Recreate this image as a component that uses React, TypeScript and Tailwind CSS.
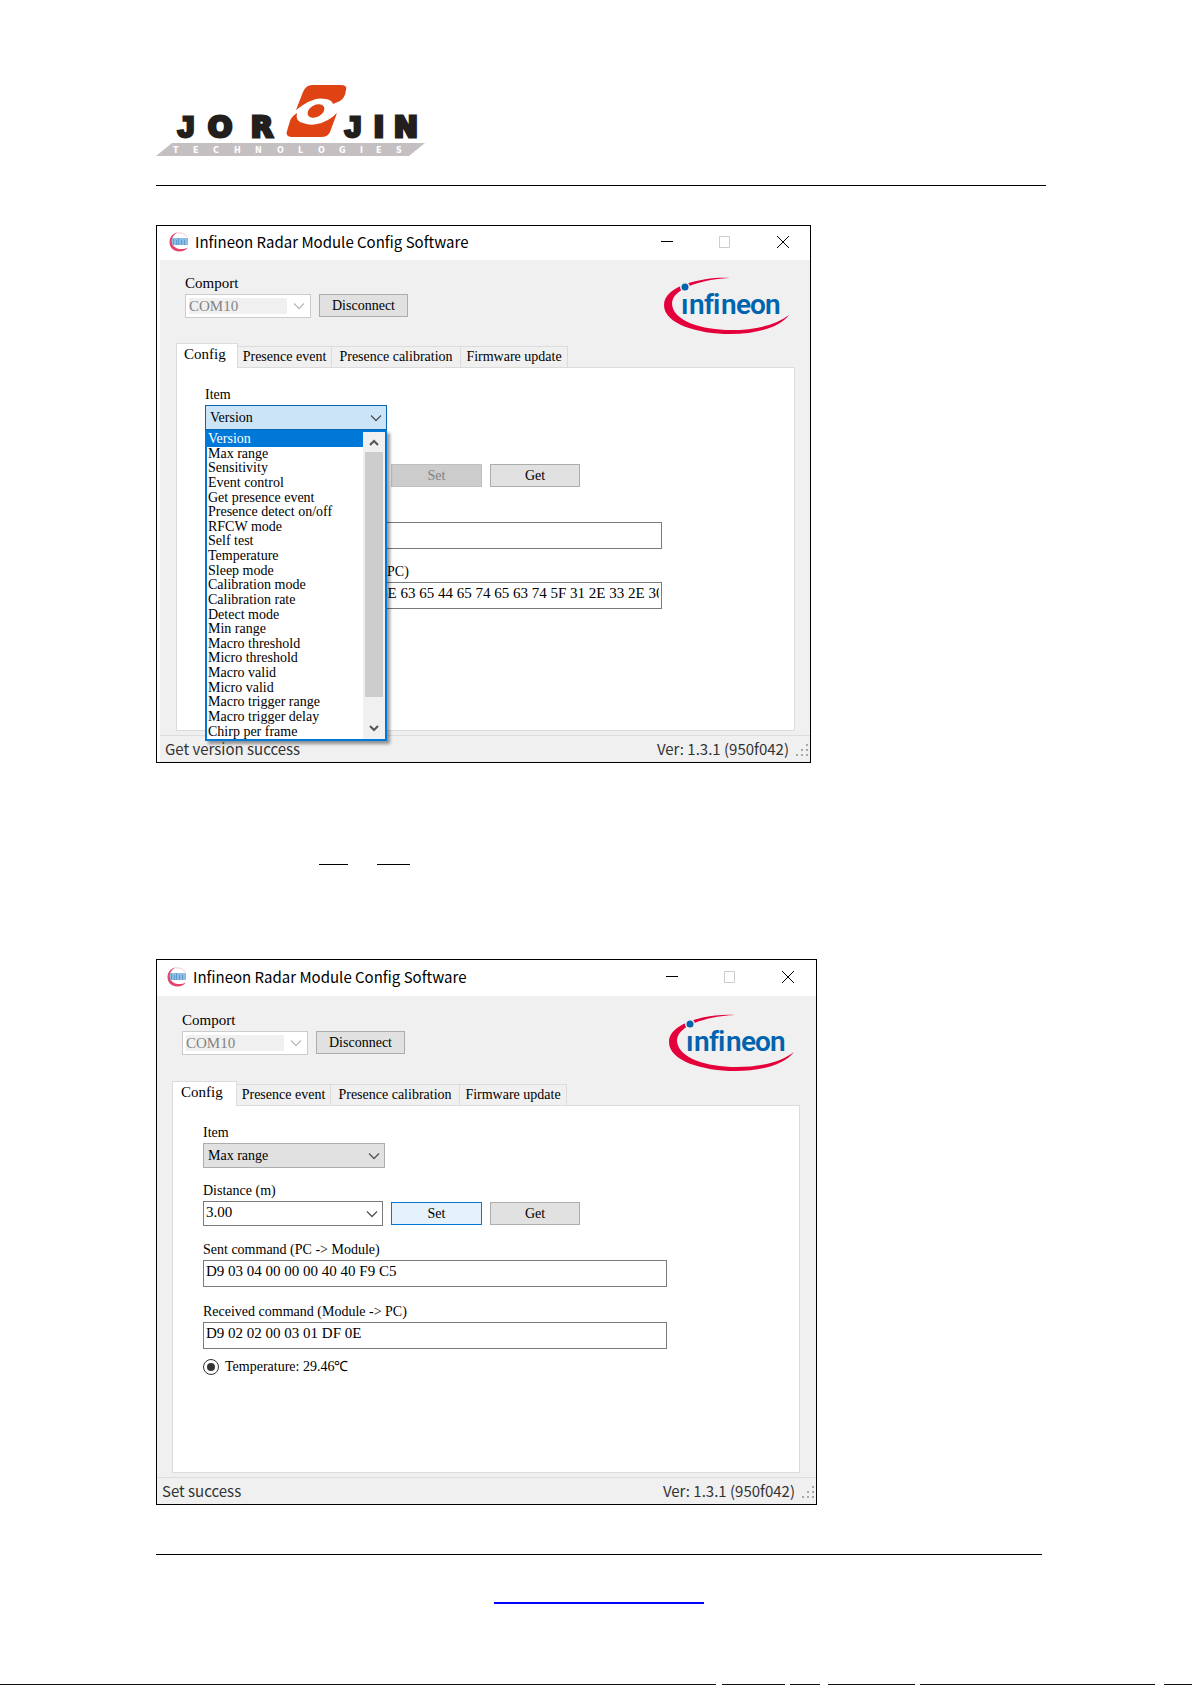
import { useId, useState } from 'react';
import type { ReactNode } from 'react';

const items = [
  'Version',
  'Max range',
  'Sensitivity',
  'Event control',
  'Get presence event',
  'Presence detect on/off',
  'RFCW mode',
  'Self test',
  'Temperature',
  'Sleep mode',
  'Calibration mode',
  'Calibration rate',
  'Detect mode',
  'Min range',
  'Macro threshold',
  'Micro threshold',
  'Macro valid',
  'Micro valid',
  'Macro trigger range',
  'Macro trigger delay',
  'Chirp per frame',
];

const tabs = [
  { label: 'Presence event', width: 'w-[94px]' },
  { label: 'Presence calibration', width: 'w-[129px]' },
  { label: 'Firmware update', width: 'w-[107px]' },
];

function JorjinLogo() {
  return (
    <svg viewBox="0 0 270 72" className="w-[270px] h-[72px]" role="img" aria-label="Jorjin Technologies">
      <g
        fontFamily="'DejaVu Sans', sans-serif"
        fontWeight="700"
        fontSize="29"
        fill="#231f1c"
        stroke="#231f1c"
        strokeWidth="3"
        textAnchor="middle"
      >
        <text y="52" x="30" fontFamily="'Liberation Sans', sans-serif" fontSize="30">J</text>
        <text y="52" x="64 106">OR</text>
        <text y="52" x="197" fontFamily="'Liberation Sans', sans-serif" fontSize="30">J</text>
        <text y="52" x="223 250">IN</text>
      </g>
      <path d="M140 25 L147 7 Q150 0 156 0 H184 Q192 0 190 5 Q189 13 184 16 L177 19 Q176 15 170 14 Q164 13 160 14 Q153 16 147 20 Z" fill="#df4213" />
      <path d="M141 28 Q139 36 147 38 Q154 41 161 39 Q172 37 181 28 L174 47 Q172 52 165 52 H135 Q129 51 131 46 L134 36 Q135 32 141 28 Z" fill="#df4213" />
      <ellipse cx="160" cy="26" rx="9" ry="6" transform="rotate(-28 160 26)" fill="#df4213" />
      <path d="M16 58 H269 L253 71 H0 Z" fill="#c4c0c1" />
      <text
        y="68"
        x="17 37 57 78 99 121 142 162 183 204 220 240"
        fontFamily="'DejaVu Sans', sans-serif"
        fontWeight="700"
        fontSize="8"
        fill="#fff"
      >
        TECHNOLOGIES
      </text>
    </svg>
  );
}

function InfineonLogo({ className }: { className: string }) {
  return (
    <svg viewBox="0 0 126 57" className={className} role="img" aria-label="Infineon">
      <path
        d="M66 1 C48 -1 0 6 0 28 C0 47 34 57 66 57 C94 57 116 50 125 38 C112 48 92 53 67 53 C38 53 9 44 8 27 C8 10 42 2 66 1 Z"
        fill="#e4003a"
      />
      <circle cx="21" cy="10" r="5" fill="#f0f0f0" />
      <circle cx="21" cy="10" r="3.5" fill="#0063ae" />
      <text
        x="17 25 40 49 57 72 86 101"
        y="37"
        fontFamily="Roboto, sans-serif"
        fontWeight="600"
        fontSize="28"
        fill="#0063ae"
      >
        ınfineon
      </text>
    </svg>
  );
}

function AppIcon() {
  return (
    <svg viewBox="0 0 20 20" className="w-5 h-5">
      <path d="M9 .5 C4 1 .5 5 .5 10 C.5 16 5 19.500 10 19.500 C14 19.500 17 18 19 15.500 C12 18.500 5 17 3 11 C2 6 5 2 9 .5 Z" fill="#e4436c" />
      <path d="M9 1 Q15 0 18 5" fill="none" stroke="#f3c6d2" />
      <rect x="3" y="6" width="16" height="7" fill="#8fbde2" />
      <path d="M4.500 7v6M7.500 8v5M9.500 6v7M12.500 8v5M15.500 8v5" stroke="#5b9bd0" />
    </svg>
  );
}

function Chevron({ className = 'text-[#555]' }: { className?: string }) {
  return (
    <svg
      viewBox="0 0 12 8"
      className={`absolute right-[5px] top-1/2 -mt-1 w-3 h-2 pointer-events-none ${className}`}
      fill="none"
      stroke="currentColor"
      strokeWidth="1.3"
    >
      <path d="M1 1.5 6 6.5 11 1.5" />
    </svg>
  );
}

function PushButton({ children, className }: { children: ReactNode; className: string }) {
  return <button className={`h-[23px] border text-sm leading-5 ${className}`}>{children}</button>;
}

type WindowProps = {
  item: string;
  open?: boolean;
  distance?: string;
  sent: string;
  received: string;
  status: string;
  frame: string;
  titleBar: string;
  body: string;
  header: string;
  tabArea: string;
  configTab: string;
  panel: string;
  field: string;
  sentBlock: string;
  setButton: string;
};

function ConfigWindow(props: WindowProps) {
  const id = useId();
  const [item, setItem] = useState(props.item);
  const [sent, setSent] = useState(props.sent);
  const [received, setReceived] = useState(props.received);

  return (
    <section className={`w-full border border-black bg-[#f0f0f0] font-['Liberation_Serif',serif] text-black ${props.frame}`}>
      {/* Title bar */}
      <div className={`flex items-center bg-white pb-[2px] ${props.titleBar}`}>
        <AppIcon />
        <h2 className="ml-[6px] font-['Noto_Sans_CJK_TC',sans-serif] text-[15px] leading-5">
          Infineon Radar Module Config Software
        </h2>
        <div className="ml-auto flex items-center gap-[46px]">
          <button aria-label="Minimize" className="w-3 h-3">
            <svg viewBox="0 0 12 12" className="w-3 h-3" stroke="#000"><path d="M0 5.5h12" /></svg>
          </button>
          <button aria-label="Maximize" disabled className="w-3 h-3">
            <svg viewBox="0 0 12 12" className="w-3 h-3" fill="none" stroke="#ccc"><path d="M.5.5h10v11h-10z" /></svg>
          </button>
          <button aria-label="Close" className="w-3 h-3">
            <svg viewBox="0 0 12 12" className="w-3 h-3" stroke="#000"><path d="M0 0 12 12M12 0 0 12" /></svg>
          </button>
        </div>
      </div>

      <div className={props.body}>
        {/* Port selection and brand */}
        <div className={`flex justify-between ${props.header}`}>
          <div>
            <label htmlFor={`${id}-port`} className="block text-[15px] leading-5">Comport</label>
            <div className="mt-px flex gap-2">
              <div className="relative w-[126px] h-6 border border-[#ccc] bg-white p-[3px]">
                <select
                  id={`${id}-port`}
                  disabled
                  className="block w-[98px] h-4 appearance-none bg-[#f0f0f0] text-[15px] leading-4 text-[#838383] opacity-100"
                >
                  <option>COM10</option>
                </select>
                <Chevron className="text-[#bbb]" />
              </div>
              <PushButton className="w-[89px] border-[#adadad] bg-[#e1e1e1]">Disconnect</PushButton>
            </div>
          </div>
          <InfineonLogo className="mt-1 w-[126px] h-[57px]" />
        </div>

        {/* Tabs */}
        <div className={props.tabArea}>
          <div role="tablist" className="flex items-end h-6">
            <button
              role="tab"
              aria-selected="true"
              className={`relative h-[25px] -mb-px border border-b-0 border-[#dcdcdc] bg-white pb-1 text-left text-[15px] leading-5 ${props.configTab}`}
            >
              Config
            </button>
            {tabs.map((tab) => (
              <button
                key={tab.label}
                role="tab"
                aria-selected="false"
                className={`h-[21px] border border-l-0 border-b-0 border-[#dcdcdc] text-sm leading-5 ${tab.width}`}
              >
                {tab.label}
              </button>
            ))}
          </div>

          <div role="tabpanel" className={`border border-[#dcdcdc] bg-white pt-[17px] pr-[132px] ${props.panel}`}>
            <div className="relative h-[58px] w-[182px]">
              <label htmlFor={`${id}-item`} className="block text-sm leading-5">Item</label>
              <div className="relative">
                <select
                  id={`${id}-item`}
                  value={item}
                  onChange={(e) => setItem(e.target.value)}
                  className={`block w-full h-[25px] appearance-none border px-1 text-sm leading-5 ${
                    props.open ? 'border-[#0a64ad] bg-[#cce4f7]' : 'border-[#adadad] bg-[#e1e1e1]'
                  }`}
                >
                  {items.map((name) => (
                    <option key={name}>{name}</option>
                  ))}
                </select>
                <Chevron />
              </div>
              {props.open && (
                <div className="absolute z-10 left-0 top-[45px] w-full h-[311px] flex border-2 border-[#0078d7] bg-white shadow-[3px_3px_3px_rgba(0,0,0,0.4)]">
                  <ul role="listbox" aria-label="Item" className="flex-1 flex flex-col">
                    {items.map((name) => (
                      <li
                        key={name}
                        role="option"
                        aria-selected={name === item}
                        onClick={() => setItem(name)}
                        className={`flex-1 px-px text-sm leading-[14px] ${name === item ? 'bg-[#0078d7] text-white' : ''}`}
                      >
                        {name}
                      </li>
                    ))}
                  </ul>
                  <div className="w-[22px] flex flex-col items-center bg-[#f0f0f0] text-[#555]">
                    <svg viewBox="0 0 12 20" className="w-3 h-5" fill="none" stroke="currentColor" strokeWidth="2">
                      <path d="M2 13 6 9 10 13" />
                    </svg>
                    <div className="w-[18px] h-[245px] bg-[#cdcdcd]" />
                    <svg viewBox="0 0 12 20" className="mt-auto w-3 h-5" fill="none" stroke="currentColor" strokeWidth="2">
                      <path d="M2 7 6 11 10 7" />
                    </svg>
                  </div>
                </div>
              )}
            </div>

            <div className="flex h-[59px]">
              <div className={props.field}>
                {props.distance && (
                  <>
                    <label htmlFor={`${id}-distance`} className="block text-sm leading-5">Distance (m)</label>
                    <div className="relative w-[180px]">
                      <select
                        id={`${id}-distance`}
                        className="block w-full h-[25px] appearance-none border border-[#7a7a7a] bg-white px-[2px] pb-1 text-[15px] leading-5"
                      >
                        <option>{props.distance}</option>
                      </select>
                      <Chevron />
                    </div>
                  </>
                )}
              </div>
              <div className="flex gap-2 pt-[21px]">
                <PushButton className={`w-[91px] ${props.setButton}`}>Set</PushButton>
                <PushButton className="w-[90px] border-[#adadad] bg-[#e1e1e1]">Get</PushButton>
              </div>
            </div>

            <div className={props.sentBlock}>
              <label htmlFor={`${id}-sent`} className="block text-sm leading-5">{'Sent command (PC -> Module)'}</label>
              <input
                id={`${id}-sent`}
                value={sent}
                onChange={(e) => setSent(e.target.value)}
                className="block h-[27px] w-full border border-[#7a7a7a] bg-white px-[2px] pb-1 text-[15px] leading-5"
              />
            </div>

            <div className="h-[55px]">
              <label htmlFor={`${id}-received`} className="block text-sm leading-5">{'Received command (Module -> PC)'}</label>
              <input
                id={`${id}-received`}
                value={received}
                onChange={(e) => setReceived(e.target.value)}
                className="block h-[27px] w-full border border-[#7a7a7a] bg-white px-[2px] pb-1 text-[15px] leading-5"
              />
            </div>

            <label className="flex items-center gap-[6px] text-sm leading-5">
              <input
                type="radio"
                defaultChecked
                className="w-4 h-4 appearance-none rounded-full border border-[#333] bg-[#333] bg-clip-content p-[3px]"
              />
              Temperature: 29.46℃
            </label>
          </div>
        </div>

        {/* Status bar */}
        <div className="mt-1 flex items-center h-[27px] border-t border-[#dcdcdc] pl-[5px] font-['Noto_Sans_CJK_TC',sans-serif] text-[15px] leading-5 text-[#333]">
          <span>{props.status}</span>
          <span className="ml-auto">Ver: 1.3.1 (950f042)</span>
          <svg viewBox="0 0 14 14" className="ml-[6px] mr-px mt-1 w-[14px] h-[14px]" fill="#a8a8a8">
            <path d="M11 0h2v2h-2zM6 5h2v2H6zM11 5h2v2h-2zM1 10h2v2H1zM6 10h2v2H6zM11 10h2v2h-2z" />
          </svg>
        </div>
      </div>
    </section>
  );
}

export default function App() {
  return (
    <div className="bg-white">
      <div className="pt-[85px] pl-[156px] pr-[146px]">
        <header className="border-b border-black pb-7">
          <JorjinLogo />
        </header>

        <main className="pt-[39px]">
          <ConfigWindow
            open
            item="Version"
            sent=""
            received="D9 03 17 00 50 72 65 73 65 6E 63 65 44 65 74 65 63 74 5F 31 2E 33 2E 30 2E 30"
            status="Get version success"
            frame="max-w-[655px]"
            titleBar="h-[34px] pl-3 pr-[21px]"
            body="border-l-[3px] border-white"
            header="pt-[13px] pl-[25px] pr-5"
            tabArea="mt-[9px] ml-4 mr-[15px]"
            configTab="w-[62px] pl-[7px]"
            panel="h-[364px] pl-7"
            field="w-[186px]"
            sentBlock="h-[60px]"
            setButton="border-[#bfbfbf] bg-[#ccc] text-[#838383]"
          />

          {/* Underlined words in the step text */}
          <div className="flex gap-[29px] pt-[101px] pl-[163px]">
            <div className="w-[29px] border-t border-black" />
            <div className="w-[33px] border-t border-black" />
          </div>

          <div className="pt-[94px]">
            <ConfigWindow
              item="Max range"
              distance="3.00"
              sent="D9 03 04 00 00 00 40 40 F9 C5"
              received="D9 02 02 00 03 01 DF 0E"
              status="Set success"
              frame="max-w-[661px]"
              titleBar="h-9 pl-[10px] pr-[22px]"
              body=""
              header="pt-[14px] pl-[25px] pr-[21px]"
              tabArea="mt-[10px] ml-[15px] mr-4"
              configTab="w-[65px] pl-2"
              panel="h-[368px] pl-[30px]"
              field="w-[188px]"
              sentBlock="h-[62px]"
              setButton="border-[#0078d7] bg-[#e5f1fb]"
            />
          </div>
        </main>

        <footer className="mt-[49px] mr-1 border-t border-black pt-[47px]">
          <a href="#" aria-label="Website" className="ml-[338px] block w-[210px] h-[2px] bg-[#0000ff]" />
        </footer>
      </div>

      {/* Page edge */}
      <svg className="mt-20 block w-full h-px" stroke="#111" strokeWidth="2">
        <path d="M0 0H716M722 0H785M790 0H820M828 0H915M920 0H1155M1164 0H1192" />
      </svg>
    </div>
  );
}
